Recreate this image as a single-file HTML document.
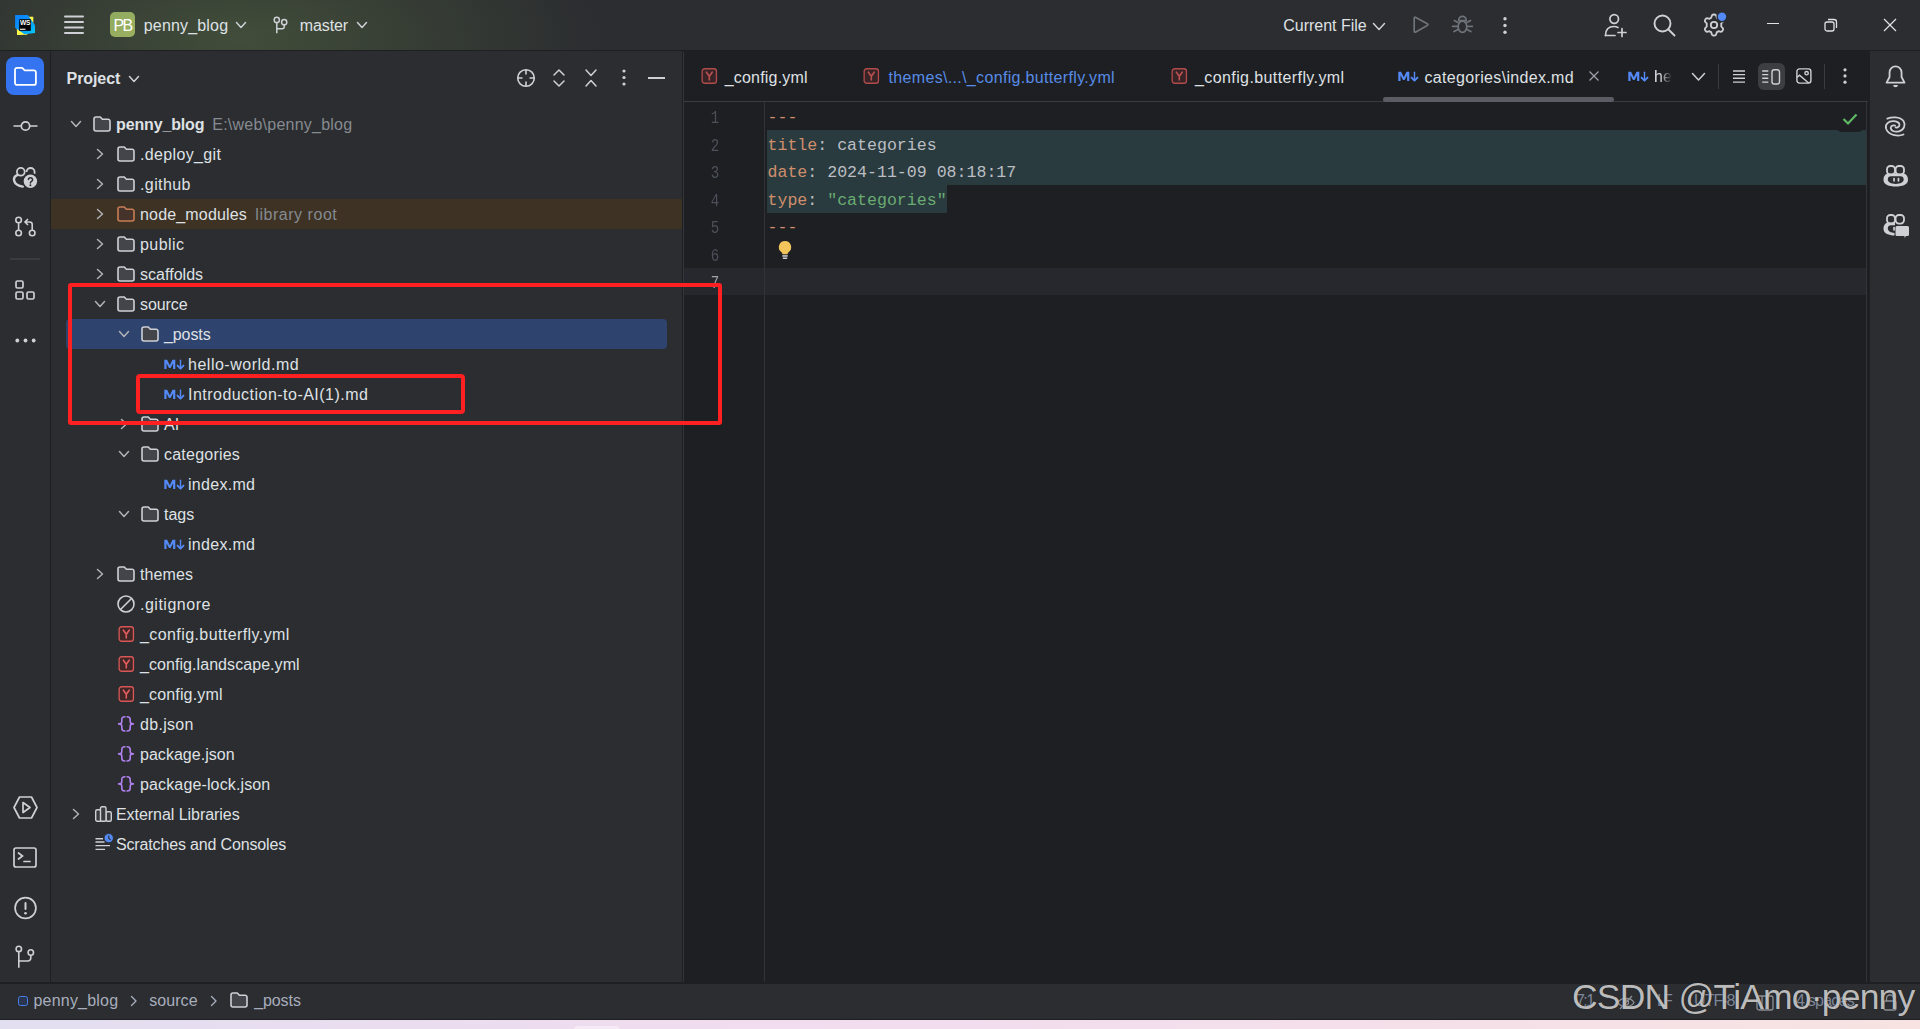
<!DOCTYPE html><html><head><meta charset="utf-8"><style>
*{margin:0;padding:0;box-sizing:border-box}
html,body{width:1920px;height:1029px;overflow:hidden;background:#2B2D30;font-family:"Liberation Sans",sans-serif;color:#DFE1E5}
.abs{position:absolute}
.t{position:absolute;white-space:pre;font-size:16px;line-height:20px;color:#DFE1E5}
svg{position:absolute;overflow:visible}
.mono{font-family:"Liberation Mono",monospace}
</style></head><body><div class="abs" style="left:0px;top:0px;width:1920px;height:50px;background:#2B2D30;"></div>
<div class="abs" style="left:0px;top:0px;width:900px;height:50px;background:radial-gradient(ellipse 360px 150px at 240px 38px, rgba(105,135,75,0.36) 0%, rgba(95,120,68,0.21) 50%, rgba(43,45,48,0) 100%);"></div>
<div class="abs" style="left:0px;top:50px;width:1920px;height:1px;background:#1E1F22;"></div>
<div class="abs" style="left:0px;top:51px;width:50px;height:931px;background:#2B2D30;"></div>
<div class="abs" style="left:50px;top:51px;width:1px;height:931px;background:#1E1F22;"></div>
<div class="abs" style="left:51px;top:51px;width:631px;height:931px;background:#2B2D30;"></div>
<div class="abs" style="left:682px;top:51px;width:2px;height:931px;background:#1E1F22;"></div>
<div class="abs" style="left:683px;top:52px;width:1px;height:930px;background:#34363B;"></div>
<div class="abs" style="left:684px;top:51px;width:1184px;height:931px;background:#1E1F22;"></div>
<div class="abs" style="left:1868px;top:51px;width:2px;height:931px;background:#1E1F22;"></div>
<div class="abs" style="left:1870px;top:51px;width:50px;height:931px;background:#2B2D30;"></div>
<div class="abs" style="left:0px;top:982px;width:1920px;height:2px;background:#1E1F22;"></div>
<div class="abs" style="left:0px;top:984px;width:1920px;height:36px;background:#2B2D30;"></div>
<div class="abs" style="left:0px;top:1019px;width:1920px;height:1px;background:#1E1F22;"></div>
<div class="abs" style="left:0px;top:1020px;width:1920px;height:9px;background:linear-gradient(90deg,#E2DFF0 0%,#EADDF0 20%,#F0DCEF 35%,#F3DEED 60%,#F6E1E6 85%,#F8E3E2 100%);"></div>
<div class="abs" style="left:574px;top:1025.5px;width:46px;height:4px;background:#F6EAF6;border-radius:4px 4px 0 0"></div>
<svg style="left:15px;top:15px" width="20" height="20" viewBox="0 0 20 20"><defs><linearGradient id="wsg" x1="0" y1="0" x2="1" y2="1"><stop offset="0" stop-color="#0A80FF"/><stop offset="0.55" stop-color="#0796F5"/><stop offset="1" stop-color="#07D0F6"/></linearGradient></defs><polygon points="1.5,1.5 18.3,1.8 18.3,10 12,19.8 2,20" fill="#FCF84A"/><polygon points="0.1,0.1 12.8,0.1 20,10.2 20,18 9.5,19.3 0.1,12.8" fill="url(#wsg)"/><rect x="4.2" y="4.2" width="11.6" height="11.6" fill="#000"/><text x="10" y="10.2" font-family="Liberation Sans" font-weight="bold" font-size="6.6" letter-spacing="-0.4" fill="#fff" text-anchor="middle">WS</text><rect x="5" y="13.7" width="5.5" height="1.1" fill="#fff"/></svg>
<svg style="left:64px;top:15px" width="20" height="20" viewBox="0 0 20 20"><g stroke="#CED0D6" stroke-width="2" stroke-linecap="round"><line x1="1" y1="1.5" x2="19" y2="1.5"/><line x1="1" y1="7" x2="19" y2="7"/><line x1="1" y1="12.5" x2="19" y2="12.5"/><line x1="1" y1="18" x2="19" y2="18"/></g></svg>
<div class="abs" style="left:110px;top:12px;width:25px;height:25px;background:linear-gradient(135deg,#8EAA5F,#9DB060);border-radius:5px"></div>
<div class="t" style="left:113.5px;top:15.76px;font-size:16px;line-height:20.0px;color:#FFFFFF;font-weight:normal;letter-spacing:-1.772px;">PB</div>
<div class="t" style="left:143.75px;top:15.76px;font-size:16px;line-height:20.0px;color:#DFE1E5;font-weight:normal;letter-spacing:0.175px;">penny_blog</div>
<svg style="left:236px;top:22px" width="10" height="6" viewBox="0 0 10 6"><polyline points="0.5,0.5 5.0,5.5 9.5,0.5" fill="none" stroke="#CED0D6" stroke-width="1.5" stroke-linecap="round" stroke-linejoin="round"/></svg>
<svg style="left:273px;top:17px" width="15" height="17" viewBox="0 0 15 17"><g fill="none" stroke="#CED0D6" stroke-width="1.5"><circle cx="3.8" cy="2.9" r="2.6"/><circle cx="11.2" cy="5.2" r="2.6"/><path d="M3.8 5.5 V16.3 M11.2 7.8 V9.7 a2 2 0 0 1 -2 2 H3.8"/></g></svg>
<div class="t" style="left:299.8px;top:15.76px;font-size:16px;line-height:20.0px;color:#DFE1E5;font-weight:normal;letter-spacing:-0.118px;">master</div>
<svg style="left:356.5px;top:22px" width="10" height="6" viewBox="0 0 10 6"><polyline points="0.5,0.5 5.0,5.5 9.5,0.5" fill="none" stroke="#CED0D6" stroke-width="1.5" stroke-linecap="round" stroke-linejoin="round"/></svg>
<div class="t" style="left:1283.3px;top:15.76px;font-size:16px;line-height:20.0px;color:#DFE1E5;font-weight:normal;letter-spacing:-0.015px;">Current File</div>
<svg style="left:1373px;top:22.5px" width="12" height="7" viewBox="0 0 12 7"><polyline points="0.5,0.5 6.0,6.5 11.5,0.5" fill="none" stroke="#CED0D6" stroke-width="1.5" stroke-linecap="round" stroke-linejoin="round"/></svg>
<svg style="left:1412px;top:15px" width="18" height="20" viewBox="0 0 18 20"><path d="M2.2 3.3 Q2.2 1.6 3.8 2.5 L15.3 8.8 Q16.6 9.6 15.3 10.4 L3.8 16.9 Q2.2 17.8 2.2 16 Z" fill="none" stroke="#6F737A" stroke-width="1.7" stroke-linejoin="round"/></svg>
<svg style="left:1452px;top:15px" width="21" height="19" viewBox="0 0 21 19"><g fill="none" stroke="#6F737A" stroke-width="1.7" stroke-linecap="round"><path d="M6.75 5.6 V5 a3.7 3.7 0 0 1 7.4 0 V5.6 Z"/><ellipse cx="10.45" cy="11.75" rx="4.3" ry="5.6"/><path d="M2.3 5.6 L6 7.5 M0.6 11.3 H5.8 M2 16.5 L6 14.5 M18.6 5.6 L14.9 7.5 M20.3 11.3 H15.1 M18.9 16.5 L14.9 14.5"/></g></svg>
<svg style="left:1503px;top:16.5px" width="4" height="17" viewBox="0 0 4 17"><g fill="#CED0D6"><circle cx="2" cy="1.8" r="1.7"/><circle cx="2" cy="8.5" r="1.7"/><circle cx="2" cy="15.3" r="1.7"/></g></svg>
<svg style="left:1603.5px;top:13px" width="24" height="24" viewBox="0 0 24 24"><g fill="none" stroke="#CED0D6" stroke-width="1.7" stroke-linecap="round"><circle cx="10.2" cy="6" r="4.3"/><path d="M1.5 22.5 C1.5 16.5 5 13.5 10 13.5 C11.5 13.5 12.8 13.8 14 14.4"/><path d="M1.5 22.5 H11"/><path d="M18 15.5 V23.5 M14 19.5 H22"/></g></svg>
<svg style="left:1653px;top:14px" width="23" height="23" viewBox="0 0 23 23"><g fill="none" stroke="#CED0D6" stroke-width="1.9" stroke-linecap="round"><circle cx="9.5" cy="9.5" r="8"/><path d="M15.5 15.5 L21.5 21.5"/></g></svg>
<svg style="left:1702px;top:13px" width="24" height="24" viewBox="0 0 24 24"><g fill="none" stroke="#CED0D6" stroke-width="1.8" stroke-linejoin="round"><path d="M10 2.3 C10.8 1.2 13.2 1.2 14 2.3 L14.8 4.8 C15.3 5 16 5.4 16.5 5.8 L19 5.2 C20.3 5.3 21.5 7.3 21 8.6 L19.2 10.5 C19.3 11.1 19.3 12.9 19.2 13.5 L21 15.4 C21.5 16.7 20.3 18.7 19 18.8 L16.5 18.2 C16 18.6 15.3 19 14.8 19.2 L14 21.7 C13.2 22.8 10.8 22.8 10 21.7 L9.2 19.2 C8.7 19 8 18.6 7.5 18.2 L5 18.8 C3.7 18.7 2.5 16.7 3 15.4 L4.8 13.5 C4.7 12.9 4.7 11.1 4.8 10.5 L3 8.6 C2.5 7.3 3.7 5.3 5 5.2 L7.5 5.8 C8 5.4 8.7 5 9.2 4.8 Z"/><circle cx="12" cy="12" r="3.2"/></g></svg>
<svg style="left:1715.5px;top:11px" width="12" height="12" viewBox="0 0 12 12"><circle cx="6" cy="5.8" r="4.9" fill="#548AF7" stroke="#2B2D30" stroke-width="1.4"/></svg>
<div class="abs" style="left:1767px;top:23px;width:12px;height:1.2px;background:#DFE1E5;"></div>
<svg style="left:1824px;top:18px" width="14" height="14" viewBox="0 0 14 14"><g fill="none" stroke="#DFE1E5" stroke-width="1.3"><rect x="1" y="4" width="9" height="9" rx="2"/><path d="M4 1.5 h6 a2.5 2.5 0 0 1 2.5 2.5 v6"/></g></svg>
<svg style="left:1883px;top:18px" width="14" height="14" viewBox="0 0 14 14"><g stroke="#DFE1E5" stroke-width="1.3"><line x1="1" y1="1" x2="13" y2="13"/><line x1="13" y1="1" x2="1" y2="13"/></g></svg>
<div class="abs" style="left:6px;top:57px;width:38px;height:38px;background:#3574F0;border-radius:8px"></div>
<svg style="left:13px;top:64px" width="24" height="24" viewBox="0 0 24 24"><path d="M2 5.9 a2 2 0 0 1 2-2 h5.2 l2.5 2.5 h9.2 a2 2 0 0 1 2 2 v10.5 a2 2 0 0 1 -2 2 h-16.9 a2 2 0 0 1 -2-2 Z" fill="none" stroke="#FFFFFF" stroke-width="1.8" stroke-linejoin="round"/></svg>
<svg style="left:13px;top:120px" width="25" height="12" viewBox="0 0 25 12"><g fill="none" stroke="#CED0D6" stroke-width="1.7"><circle cx="12.5" cy="6" r="4.2"/><path d="M0.5 6 H8.3 M16.7 6 H24.5"/></g></svg>
<svg style="left:13px;top:165px" width="25" height="24" viewBox="0 0 25 24"><g fill="none" stroke="#CED0D6" stroke-width="1.8"><circle cx="7.8" cy="6.8" r="3.9"/><path d="M13.6 7 a4 4 0 0 1 8 0 v1.8"/></g><path d="M4.2 10.2 C-0.8 12.5 -0.5 19.8 9.8 21.6" fill="none" stroke="#CED0D6" stroke-width="2.4" stroke-linecap="round"/><circle cx="17.4" cy="16.3" r="6.7" fill="#CED0D6"/><path d="M15.4 14.6 a2.1 2 0 1 1 3.1 1.8 c-0.8 0.45 -1.1 0.9 -1.1 1.7" fill="none" stroke="#2B2D30" stroke-width="1.5" stroke-linecap="round"/><circle cx="17.4" cy="20.2" r="1" fill="#2B2D30"/></svg>
<svg style="left:14px;top:215px" width="23" height="22" viewBox="0 0 23 22"><g fill="none" stroke="#CED0D6" stroke-width="1.6"><circle cx="4.6" cy="5" r="2.8"/><circle cx="4.6" cy="18" r="2.8"/><circle cx="18.2" cy="18" r="2.8"/><path d="M4.6 7.8 V15.2 M18.2 15.2 V9.5 a2.5 2.5 0 0 0 -2.5-2.5 H11.5 M14 4 L11 7 L14 10"/></g></svg>
<div class="abs" style="left:10px;top:258px;width:30px;height:2px;background:#393B40;"></div>
<svg style="left:15px;top:280px" width="21" height="21" viewBox="0 0 21 21"><g fill="none" stroke="#CED0D6" stroke-width="1.7"><rect x="1" y="1" width="7" height="7" rx="1.5"/><rect x="1" y="12" width="7" height="7" rx="1.5"/><rect x="12" y="12" width="7" height="7" rx="1.5"/></g></svg>
<svg style="left:15px;top:338px" width="21" height="5" viewBox="0 0 21 5"><g fill="#CED0D6"><circle cx="2.3" cy="2.5" r="1.9"/><circle cx="10.5" cy="2.5" r="1.9"/><circle cx="18.7" cy="2.5" r="1.9"/></g></svg>
<svg style="left:13px;top:796px" width="25" height="23" viewBox="0 0 25 23"><g fill="none" stroke="#CED0D6" stroke-width="1.7" stroke-linejoin="round"><path d="M6.5 1 H18.5 L24 11.5 L18.5 22 H6.5 L1 11.5 Z"/><path d="M10 6.5 L17 11.5 L10 16.5 Z"/></g></svg>
<svg style="left:13px;top:847px" width="24" height="21" viewBox="0 0 24 21"><g fill="none" stroke="#CED0D6" stroke-width="1.7" stroke-linecap="round"><rect x="1" y="1" width="22" height="19" rx="2"/><path d="M5.5 6 L9.5 9 L5.5 12 M11 14.5 H17"/></g></svg>
<svg style="left:13px;top:896px" width="24" height="24" viewBox="0 0 24 24"><g fill="none" stroke="#CED0D6" stroke-width="1.7"><circle cx="12.5" cy="12" r="10.4"/></g><rect x="11.5" y="6" width="2" height="8" rx="1" fill="#CED0D6"/><circle cx="12.5" cy="17.3" r="1.3" fill="#CED0D6"/></svg>
<svg style="left:15px;top:946px" width="21" height="23" viewBox="0 0 21 23"><g fill="none" stroke="#CED0D6" stroke-width="1.6"><circle cx="3.8" cy="2.9" r="2.7"/><circle cx="15.8" cy="6.5" r="2.7"/><path d="M3.8 5.6 V21.8 M15.8 9.2 V12 a3 3 0 0 1 -3 3 H3.8"/></g></svg>
<svg style="left:1884px;top:64px" width="23" height="24" viewBox="0 0 23 24"><path d="M2.6 18.7 L5.55 13 V8.4 A6 6 0 0 1 17.55 8.4 V13 L20.5 18.7 Z" fill="none" stroke="#CED0D6" stroke-width="1.8" stroke-linejoin="round"/><path d="M9.2 21 a2.35 2.35 0 0 0 4.7 0 Z" fill="#CED0D6"/></svg>
<svg style="left:1882px;top:113px" width="28" height="26" viewBox="0 0 28 26"><g fill="none" stroke="#CED0D6" stroke-width="1.75" stroke-linecap="round"><path d="M5.3 5.6 C9 4 18 3 21.5 8 C24 12 22 17 17 18.3 C12 19.5 8.5 17.5 8.8 14.5 C9 12.5 11.5 12 13.1 12.6"/><path d="M21.5 21.5 C17 23.5 7 23 4.2 16 C2.5 11 6.5 8.3 11 8.2 C14.5 8.1 17.7 9.5 17.5 12 C17.3 14 15 14.8 13.6 14.4"/></g></svg>
<svg style="left:1883px;top:165px" width="26" height="22" viewBox="0 0 26 22"><g fill="none" stroke="#CED0D6" stroke-width="1.8"><rect x="4" y="1" width="8" height="8.6" rx="3.3"/><rect x="12.6" y="1" width="8.4" height="8.6" rx="3.3"/></g><path fill-rule="evenodd" fill="#CED0D6" d="M0.5 15 C0.5 10.5 3 8.6 6 8.6 H19.5 C22.5 8.6 25 10.5 25 15 C25 19.5 19.5 21.5 12.75 21.5 C6 21.5 0.5 19.5 0.5 15 Z M4.8 14.6 C4.8 12.2 6 11.2 8 11.2 H17.5 C19.5 11.2 20.7 12.2 20.7 14.6 C20.7 17.4 17.5 18.9 12.75 18.9 C8 18.9 4.8 17.4 4.8 14.6 Z"/><rect x="10.2" y="12.8" width="1.7" height="4" rx="0.8" fill="#CED0D6"/><rect x="14.6" y="12.8" width="1.7" height="4" rx="0.8" fill="#CED0D6"/></svg>
<svg style="left:1883px;top:214px" width="26" height="24" viewBox="0 0 26 24"><g fill="none" stroke="#CED0D6" stroke-width="1.8"><rect x="4" y="1" width="8" height="8.6" rx="3.3"/><rect x="12.6" y="1" width="8.4" height="8.6" rx="3.3"/></g><path fill-rule="evenodd" fill="#CED0D6" d="M0.5 15 C0.5 10.5 3 8.6 6 8.6 H12 V11.2 H8 C6 11.2 4.8 12.2 4.8 14.6 C4.8 17.4 8 18.9 11.5 18.9 V21.5 C6 21.4 0.5 19.5 0.5 15 Z"/><rect x="10.2" y="12.8" width="1.7" height="4" rx="0.8" fill="#CED0D6"/><path d="M14 12 H24.5 a1.5 1.5 0 0 1 1.5 1.5 V20.5 a1.5 1.5 0 0 1 -1.5 1.5 H23 L21.5 24 V22 H14 a1.5 1.5 0 0 1 -1.5 -1.5 V13.5 A1.5 1.5 0 0 1 14 12 Z" fill="#CED0D6"/></svg>
<div class="t" style="left:66.6px;top:68.66px;font-size:16px;line-height:20.0px;color:#DFE1E5;font-weight:bold;letter-spacing:-0.093px;">Project</div>
<svg style="left:129px;top:76px" width="10" height="6" viewBox="0 0 10 6"><polyline points="0.5,0.5 5.0,5.5 9.5,0.5" fill="none" stroke="#CED0D6" stroke-width="1.5" stroke-linecap="round" stroke-linejoin="round"/></svg>
<svg style="left:516px;top:68px" width="20" height="20" viewBox="0 0 20 20"><g fill="none" stroke="#CED0D6" stroke-width="1.6"><circle cx="10" cy="10" r="8.3"/><path d="M10 1.7 V6.5 M10 13.5 V18.3 M1.7 10 H6.5 M13.5 10 H18.3"/></g></svg>
<svg style="left:553px;top:69px" width="12" height="18" viewBox="0 0 12 18"><g fill="none" stroke="#CED0D6" stroke-width="1.5" stroke-linecap="round" stroke-linejoin="round"><polyline points="1,6 6,1 11,6"/><polyline points="1,12 6,17 11,12"/></g></svg>
<svg style="left:585px;top:69px" width="12" height="18" viewBox="0 0 12 18"><g fill="none" stroke="#CED0D6" stroke-width="1.5" stroke-linecap="round" stroke-linejoin="round"><polyline points="1,1 6,6.5 11,1"/><polyline points="1,17 6,11.5 11,17"/></g></svg>
<svg style="left:622px;top:69px" width="4" height="17" viewBox="0 0 4 17"><g fill="#CED0D6"><circle cx="2" cy="2" r="1.6"/><circle cx="2" cy="8.5" r="1.6"/><circle cx="2" cy="15" r="1.6"/></g></svg>
<div class="abs" style="left:648px;top:77px;width:17px;height:1.8px;background:#CED0D6;"></div>
<div class="abs" style="left:51px;top:199px;width:631px;height:30px;background:#3D3223;"></div>
<div class="abs" style="left:66px;top:319px;width:601px;height:30px;background:#2E436E;border-radius:4px"></div>
<svg style="left:71px;top:121px" width="10" height="6" viewBox="0 0 10 6"><polyline points="0.5,0.5 5.0,5.5 9.5,0.5" fill="none" stroke="#B0B3B8" stroke-width="1.5" stroke-linecap="round" stroke-linejoin="round"/></svg>
<svg style="left:93px;top:116px" width="18" height="16" viewBox="0 0 18 16"><path d="M1 3 a2 2 0 0 1 2-2 h4.3 l2.1 2.2 H15 a2 2 0 0 1 2 2 V13 a2 2 0 0 1-2 2 H3 a2 2 0 0 1-2-2 Z" fill="#43454A" stroke="#CED0D6" stroke-width="1.6" stroke-linejoin="round"/></svg>
<div class="t" style="left:116px;top:115.16px;font-size:16px;line-height:20.0px;color:#DFE1E5;font-weight:bold;letter-spacing:-0.148px;">penny_blog</div>
<div class="t" style="left:212.3px;top:115.16px;font-size:16px;line-height:20.0px;color:#868A91;font-weight:normal;letter-spacing:0.229px;">E:\web\penny_blog</div>
<svg style="left:96.5px;top:149px" width="6" height="10" viewBox="0 0 6 10"><polyline points="0.5,0.5 5.5,5.0 0.5,9.5" fill="none" stroke="#B0B3B8" stroke-width="1.5" stroke-linecap="round" stroke-linejoin="round"/></svg>
<svg style="left:117px;top:146px" width="18" height="16" viewBox="0 0 18 16"><path d="M1 3 a2 2 0 0 1 2-2 h4.3 l2.1 2.2 H15 a2 2 0 0 1 2 2 V13 a2 2 0 0 1-2 2 H3 a2 2 0 0 1-2-2 Z" fill="#43454A" stroke="#CED0D6" stroke-width="1.6" stroke-linejoin="round"/></svg>
<div class="t" style="left:140px;top:145.16px;font-size:16px;line-height:20.0px;color:#DFE1E5;font-weight:normal;letter-spacing:0.346px;">.deploy_git</div>
<svg style="left:96.5px;top:179px" width="6" height="10" viewBox="0 0 6 10"><polyline points="0.5,0.5 5.5,5.0 0.5,9.5" fill="none" stroke="#B0B3B8" stroke-width="1.5" stroke-linecap="round" stroke-linejoin="round"/></svg>
<svg style="left:117px;top:176px" width="18" height="16" viewBox="0 0 18 16"><path d="M1 3 a2 2 0 0 1 2-2 h4.3 l2.1 2.2 H15 a2 2 0 0 1 2 2 V13 a2 2 0 0 1-2 2 H3 a2 2 0 0 1-2-2 Z" fill="#43454A" stroke="#CED0D6" stroke-width="1.6" stroke-linejoin="round"/></svg>
<div class="t" style="left:140px;top:175.16px;font-size:16px;line-height:20.0px;color:#DFE1E5;font-weight:normal;letter-spacing:0.393px;">.github</div>
<svg style="left:96.5px;top:209px" width="6" height="10" viewBox="0 0 6 10"><polyline points="0.5,0.5 5.5,5.0 0.5,9.5" fill="none" stroke="#B0B3B8" stroke-width="1.5" stroke-linecap="round" stroke-linejoin="round"/></svg>
<svg style="left:117px;top:206px" width="18" height="16" viewBox="0 0 18 16"><path d="M1 3 a2 2 0 0 1 2-2 h4.3 l2.1 2.2 H15 a2 2 0 0 1 2 2 V13 a2 2 0 0 1-2 2 H3 a2 2 0 0 1-2-2 Z" fill="#45322B" stroke="#C77D55" stroke-width="1.6" stroke-linejoin="round"/></svg>
<div class="t" style="left:140px;top:205.16px;font-size:16px;line-height:20.0px;color:#DFE1E5;font-weight:normal;letter-spacing:0.169px;">node_modules</div>
<div class="t" style="left:255.3px;top:205.16px;font-size:16px;line-height:20.0px;color:#868A91;font-weight:normal;letter-spacing:0.535px;">library root</div>
<svg style="left:96.5px;top:239px" width="6" height="10" viewBox="0 0 6 10"><polyline points="0.5,0.5 5.5,5.0 0.5,9.5" fill="none" stroke="#B0B3B8" stroke-width="1.5" stroke-linecap="round" stroke-linejoin="round"/></svg>
<svg style="left:117px;top:236px" width="18" height="16" viewBox="0 0 18 16"><path d="M1 3 a2 2 0 0 1 2-2 h4.3 l2.1 2.2 H15 a2 2 0 0 1 2 2 V13 a2 2 0 0 1-2 2 H3 a2 2 0 0 1-2-2 Z" fill="#43454A" stroke="#CED0D6" stroke-width="1.6" stroke-linejoin="round"/></svg>
<div class="t" style="left:140px;top:235.16px;font-size:16px;line-height:20.0px;color:#DFE1E5;font-weight:normal;letter-spacing:0.415px;">public</div>
<svg style="left:96.5px;top:269px" width="6" height="10" viewBox="0 0 6 10"><polyline points="0.5,0.5 5.5,5.0 0.5,9.5" fill="none" stroke="#B0B3B8" stroke-width="1.5" stroke-linecap="round" stroke-linejoin="round"/></svg>
<svg style="left:117px;top:266px" width="18" height="16" viewBox="0 0 18 16"><path d="M1 3 a2 2 0 0 1 2-2 h4.3 l2.1 2.2 H15 a2 2 0 0 1 2 2 V13 a2 2 0 0 1-2 2 H3 a2 2 0 0 1-2-2 Z" fill="#43454A" stroke="#CED0D6" stroke-width="1.6" stroke-linejoin="round"/></svg>
<div class="t" style="left:140px;top:265.16px;font-size:16px;line-height:20.0px;color:#DFE1E5;font-weight:normal;letter-spacing:0.027px;">scaffolds</div>
<svg style="left:95px;top:301px" width="10" height="6" viewBox="0 0 10 6"><polyline points="0.5,0.5 5.0,5.5 9.5,0.5" fill="none" stroke="#B0B3B8" stroke-width="1.5" stroke-linecap="round" stroke-linejoin="round"/></svg>
<svg style="left:117px;top:296px" width="18" height="16" viewBox="0 0 18 16"><path d="M1 3 a2 2 0 0 1 2-2 h4.3 l2.1 2.2 H15 a2 2 0 0 1 2 2 V13 a2 2 0 0 1-2 2 H3 a2 2 0 0 1-2-2 Z" fill="#43454A" stroke="#CED0D6" stroke-width="1.6" stroke-linejoin="round"/></svg>
<div class="t" style="left:140px;top:295.16px;font-size:16px;line-height:20.0px;color:#DFE1E5;font-weight:normal;letter-spacing:-0.072px;">source</div>
<svg style="left:119px;top:331px" width="10" height="6" viewBox="0 0 10 6"><polyline points="0.5,0.5 5.0,5.5 9.5,0.5" fill="none" stroke="#B0B3B8" stroke-width="1.5" stroke-linecap="round" stroke-linejoin="round"/></svg>
<svg style="left:141px;top:326px" width="18" height="16" viewBox="0 0 18 16"><path d="M1 3 a2 2 0 0 1 2-2 h4.3 l2.1 2.2 H15 a2 2 0 0 1 2 2 V13 a2 2 0 0 1-2 2 H3 a2 2 0 0 1-2-2 Z" fill="#43454A" stroke="#CED0D6" stroke-width="1.6" stroke-linejoin="round"/></svg>
<div class="t" style="left:164px;top:325.16px;font-size:16px;line-height:20.0px;color:#DFE1E5;font-weight:normal;letter-spacing:-0.090px;">_posts</div>
<svg style="left:164px;top:359px" width="20" height="11" viewBox="0 0 20 11"><path d="M0.3 10 V0.8 H3.1 L5.8 6.3 L8.5 0.8 H11.3 V10 H9.1 V4.2 L6.6 9 H5 L2.5 4.2 V10 Z" fill="#548AF7"/><g stroke="#548AF7" fill="none" stroke-linecap="round" stroke-linejoin="round"><path d="M16.5 1.2 V9.6" stroke-width="1.4"/><path d="M13.5 6.6 L16.5 9.6 L19.5 6.6" stroke-width="1.9"/></g></svg>
<div class="t" style="left:188px;top:355.16px;font-size:16px;line-height:20.0px;color:#DFE1E5;font-weight:normal;letter-spacing:0.511px;">hello-world.md</div>
<svg style="left:164px;top:389px" width="20" height="11" viewBox="0 0 20 11"><path d="M0.3 10 V0.8 H3.1 L5.8 6.3 L8.5 0.8 H11.3 V10 H9.1 V4.2 L6.6 9 H5 L2.5 4.2 V10 Z" fill="#548AF7"/><g stroke="#548AF7" fill="none" stroke-linecap="round" stroke-linejoin="round"><path d="M16.5 1.2 V9.6" stroke-width="1.4"/><path d="M13.5 6.6 L16.5 9.6 L19.5 6.6" stroke-width="1.9"/></g></svg>
<div class="t" style="left:188px;top:385.16px;font-size:16px;line-height:20.0px;color:#DFE1E5;font-weight:normal;letter-spacing:0.473px;">Introduction-to-AI(1).md</div>
<svg style="left:120.5px;top:419px" width="6" height="10" viewBox="0 0 6 10"><polyline points="0.5,0.5 5.5,5.0 0.5,9.5" fill="none" stroke="#B0B3B8" stroke-width="1.5" stroke-linecap="round" stroke-linejoin="round"/></svg>
<svg style="left:141px;top:416px" width="18" height="16" viewBox="0 0 18 16"><path d="M1 3 a2 2 0 0 1 2-2 h4.3 l2.1 2.2 H15 a2 2 0 0 1 2 2 V13 a2 2 0 0 1-2 2 H3 a2 2 0 0 1-2-2 Z" fill="#43454A" stroke="#CED0D6" stroke-width="1.6" stroke-linejoin="round"/></svg>
<div class="t" style="left:164px;top:415.16px;font-size:16px;line-height:20.0px;color:#DFE1E5;font-weight:normal;">AI</div>
<svg style="left:119px;top:451px" width="10" height="6" viewBox="0 0 10 6"><polyline points="0.5,0.5 5.0,5.5 9.5,0.5" fill="none" stroke="#B0B3B8" stroke-width="1.5" stroke-linecap="round" stroke-linejoin="round"/></svg>
<svg style="left:141px;top:446px" width="18" height="16" viewBox="0 0 18 16"><path d="M1 3 a2 2 0 0 1 2-2 h4.3 l2.1 2.2 H15 a2 2 0 0 1 2 2 V13 a2 2 0 0 1-2 2 H3 a2 2 0 0 1-2-2 Z" fill="#43454A" stroke="#CED0D6" stroke-width="1.6" stroke-linejoin="round"/></svg>
<div class="t" style="left:164px;top:445.16px;font-size:16px;line-height:20.0px;color:#DFE1E5;font-weight:normal;letter-spacing:0.227px;">categories</div>
<svg style="left:164px;top:479px" width="20" height="11" viewBox="0 0 20 11"><path d="M0.3 10 V0.8 H3.1 L5.8 6.3 L8.5 0.8 H11.3 V10 H9.1 V4.2 L6.6 9 H5 L2.5 4.2 V10 Z" fill="#548AF7"/><g stroke="#548AF7" fill="none" stroke-linecap="round" stroke-linejoin="round"><path d="M16.5 1.2 V9.6" stroke-width="1.4"/><path d="M13.5 6.6 L16.5 9.6 L19.5 6.6" stroke-width="1.9"/></g></svg>
<div class="t" style="left:188px;top:475.16px;font-size:16px;line-height:20.0px;color:#DFE1E5;font-weight:normal;letter-spacing:0.285px;">index.md</div>
<svg style="left:119px;top:511px" width="10" height="6" viewBox="0 0 10 6"><polyline points="0.5,0.5 5.0,5.5 9.5,0.5" fill="none" stroke="#B0B3B8" stroke-width="1.5" stroke-linecap="round" stroke-linejoin="round"/></svg>
<svg style="left:141px;top:506px" width="18" height="16" viewBox="0 0 18 16"><path d="M1 3 a2 2 0 0 1 2-2 h4.3 l2.1 2.2 H15 a2 2 0 0 1 2 2 V13 a2 2 0 0 1-2 2 H3 a2 2 0 0 1-2-2 Z" fill="#43454A" stroke="#CED0D6" stroke-width="1.6" stroke-linejoin="round"/></svg>
<div class="t" style="left:164px;top:505.16px;font-size:16px;line-height:20.0px;color:#DFE1E5;font-weight:normal;letter-spacing:0.013px;">tags</div>
<svg style="left:164px;top:539px" width="20" height="11" viewBox="0 0 20 11"><path d="M0.3 10 V0.8 H3.1 L5.8 6.3 L8.5 0.8 H11.3 V10 H9.1 V4.2 L6.6 9 H5 L2.5 4.2 V10 Z" fill="#548AF7"/><g stroke="#548AF7" fill="none" stroke-linecap="round" stroke-linejoin="round"><path d="M16.5 1.2 V9.6" stroke-width="1.4"/><path d="M13.5 6.6 L16.5 9.6 L19.5 6.6" stroke-width="1.9"/></g></svg>
<div class="t" style="left:188px;top:535.16px;font-size:16px;line-height:20.0px;color:#DFE1E5;font-weight:normal;letter-spacing:0.285px;">index.md</div>
<svg style="left:96.5px;top:569px" width="6" height="10" viewBox="0 0 6 10"><polyline points="0.5,0.5 5.5,5.0 0.5,9.5" fill="none" stroke="#B0B3B8" stroke-width="1.5" stroke-linecap="round" stroke-linejoin="round"/></svg>
<svg style="left:117px;top:566px" width="18" height="16" viewBox="0 0 18 16"><path d="M1 3 a2 2 0 0 1 2-2 h4.3 l2.1 2.2 H15 a2 2 0 0 1 2 2 V13 a2 2 0 0 1-2 2 H3 a2 2 0 0 1-2-2 Z" fill="#43454A" stroke="#CED0D6" stroke-width="1.6" stroke-linejoin="round"/></svg>
<div class="t" style="left:140px;top:565.16px;font-size:16px;line-height:20.0px;color:#DFE1E5;font-weight:normal;letter-spacing:0.089px;">themes</div>
<svg style="left:117px;top:595px" width="18" height="18" viewBox="0 0 18 18"><g fill="none" stroke="#CED0D6" stroke-width="1.6"><circle cx="9" cy="9" r="8"/><path d="M3.5 14.5 L14.5 3.5"/></g></svg>
<div class="t" style="left:140px;top:595.16px;font-size:16px;line-height:20.0px;color:#DFE1E5;font-weight:normal;letter-spacing:0.507px;">.gitignore</div>
<svg style="left:118px;top:626px" width="16" height="16" viewBox="0 0 16 16"><g opacity="1"><rect x="1.15" y="0.75" width="14.3" height="14.5" rx="2.6" fill="#3F2627" stroke="#D95757" stroke-width="1.3"/><path d="M5.4 4.2 L8.3 8.3 L11.2 4.2 M8.3 8.3 V12" fill="none" stroke="#E35D5D" stroke-width="1.6" stroke-linecap="round"/></g></svg>
<div class="t" style="left:140px;top:625.16px;font-size:16px;line-height:20.0px;color:#DFE1E5;font-weight:normal;letter-spacing:0.415px;">_config.butterfly.yml</div>
<svg style="left:118px;top:656px" width="16" height="16" viewBox="0 0 16 16"><g opacity="1"><rect x="1.15" y="0.75" width="14.3" height="14.5" rx="2.6" fill="#3F2627" stroke="#D95757" stroke-width="1.3"/><path d="M5.4 4.2 L8.3 8.3 L11.2 4.2 M8.3 8.3 V12" fill="none" stroke="#E35D5D" stroke-width="1.6" stroke-linecap="round"/></g></svg>
<div class="t" style="left:140px;top:655.16px;font-size:16px;line-height:20.0px;color:#DFE1E5;font-weight:normal;letter-spacing:0.066px;">_config.landscape.yml</div>
<svg style="left:118px;top:686px" width="16" height="16" viewBox="0 0 16 16"><g opacity="1"><rect x="1.15" y="0.75" width="14.3" height="14.5" rx="2.6" fill="#3F2627" stroke="#D95757" stroke-width="1.3"/><path d="M5.4 4.2 L8.3 8.3 L11.2 4.2 M8.3 8.3 V12" fill="none" stroke="#E35D5D" stroke-width="1.6" stroke-linecap="round"/></g></svg>
<div class="t" style="left:140px;top:685.16px;font-size:16px;line-height:20.0px;color:#DFE1E5;font-weight:normal;letter-spacing:0.153px;">_config.yml</div>
<svg style="left:118px;top:716px" width="16" height="16" viewBox="0 0 16 16"><g fill="none" stroke="#B180F0" stroke-width="1.6" stroke-linecap="round" stroke-linejoin="round"><path d="M6.9 0.8 C4.5 0.8 3.8 1.8 3.8 3.5 V5.8 C3.8 7 3 7.9 0.6 7.9 C3 7.9 3.8 8.8 3.8 10 V12.3 C3.8 14 4.5 15 6.9 15"/><path d="M9.1 0.8 C11.5 0.8 12.2 1.8 12.2 3.5 V5.8 C12.2 7 13 7.9 15.4 7.9 C13 7.9 12.2 8.8 12.2 10 V12.3 C12.2 14 11.5 15 9.1 15"/></g></svg>
<div class="t" style="left:140px;top:715.16px;font-size:16px;line-height:20.0px;color:#DFE1E5;font-weight:normal;letter-spacing:0.315px;">db.json</div>
<svg style="left:118px;top:746px" width="16" height="16" viewBox="0 0 16 16"><g fill="none" stroke="#B180F0" stroke-width="1.6" stroke-linecap="round" stroke-linejoin="round"><path d="M6.9 0.8 C4.5 0.8 3.8 1.8 3.8 3.5 V5.8 C3.8 7 3 7.9 0.6 7.9 C3 7.9 3.8 8.8 3.8 10 V12.3 C3.8 14 4.5 15 6.9 15"/><path d="M9.1 0.8 C11.5 0.8 12.2 1.8 12.2 3.5 V5.8 C12.2 7 13 7.9 15.4 7.9 C13 7.9 12.2 8.8 12.2 10 V12.3 C12.2 14 11.5 15 9.1 15"/></g></svg>
<div class="t" style="left:140px;top:745.16px;font-size:16px;line-height:20.0px;color:#DFE1E5;font-weight:normal;letter-spacing:0.034px;">package.json</div>
<svg style="left:118px;top:776px" width="16" height="16" viewBox="0 0 16 16"><g fill="none" stroke="#B180F0" stroke-width="1.6" stroke-linecap="round" stroke-linejoin="round"><path d="M6.9 0.8 C4.5 0.8 3.8 1.8 3.8 3.5 V5.8 C3.8 7 3 7.9 0.6 7.9 C3 7.9 3.8 8.8 3.8 10 V12.3 C3.8 14 4.5 15 6.9 15"/><path d="M9.1 0.8 C11.5 0.8 12.2 1.8 12.2 3.5 V5.8 C12.2 7 13 7.9 15.4 7.9 C13 7.9 12.2 8.8 12.2 10 V12.3 C12.2 14 11.5 15 9.1 15"/></g></svg>
<div class="t" style="left:140px;top:775.16px;font-size:16px;line-height:20.0px;color:#DFE1E5;font-weight:normal;letter-spacing:0.137px;">package-lock.json</div>
<svg style="left:72.5px;top:809px" width="6" height="10" viewBox="0 0 6 10"><polyline points="0.5,0.5 5.5,5.0 0.5,9.5" fill="none" stroke="#B0B3B8" stroke-width="1.5" stroke-linecap="round" stroke-linejoin="round"/></svg>
<svg style="left:95px;top:806px" width="17" height="16" viewBox="0 0 17 16"><g fill="#3A3C40" stroke="#CED0D6" stroke-width="1.4"><rect x="0.7" y="3.7" width="6" height="11.6" rx="1.5"/><rect x="11" y="5.7" width="5.3" height="9.6" rx="1.5"/><rect x="5.5" y="0.7" width="5.5" height="14.6" rx="1.5"/></g></svg>
<div class="t" style="left:116px;top:805.16px;font-size:16px;line-height:20.0px;color:#DFE1E5;font-weight:normal;letter-spacing:-0.050px;">External Libraries</div>
<svg style="left:95px;top:832px" width="20" height="20" viewBox="0 0 20 20"><g stroke="#CED0D6" stroke-width="1.4"><path d="M0.5 6.8 H8 M0.5 10 H9.5 M0.5 13.6 H15 M0.5 17.4 H10"/></g><circle cx="13.75" cy="6.1" r="4.6" fill="#548AF7" stroke="#2B2D30" stroke-width="0.8"/><path d="M13.75 3.4 V6.2 L15.5 7.9" fill="none" stroke="#2B2D30" stroke-width="1.1"/></svg>
<div class="t" style="left:116px;top:835.16px;font-size:16px;line-height:20.0px;color:#DFE1E5;font-weight:normal;letter-spacing:-0.152px;">Scratches and Consoles</div>
<div class="abs" style="left:684px;top:101px;width:1184px;height:1px;background:#393B40;"></div>
<svg style="left:700.5px;top:67.5px" width="16" height="16" viewBox="0 0 16 16"><g opacity="0.8"><rect x="1.15" y="0.75" width="14.3" height="14.5" rx="2.6" fill="#3F2627" stroke="#D95757" stroke-width="1.3"/><path d="M5.4 4.2 L8.3 8.3 L11.2 4.2 M8.3 8.3 V12" fill="none" stroke="#E35D5D" stroke-width="1.6" stroke-linecap="round"/></g></svg>
<div class="t" style="left:724.75px;top:67.96px;font-size:16px;line-height:20.0px;color:#DFE1E5;font-weight:normal;letter-spacing:0.189px;">_config.yml</div>
<svg style="left:862.5px;top:67.5px" width="16" height="16" viewBox="0 0 16 16"><g opacity="0.8"><rect x="1.15" y="0.75" width="14.3" height="14.5" rx="2.6" fill="#3F2627" stroke="#D95757" stroke-width="1.3"/><path d="M5.4 4.2 L8.3 8.3 L11.2 4.2 M8.3 8.3 V12" fill="none" stroke="#E35D5D" stroke-width="1.6" stroke-linecap="round"/></g></svg>
<div class="t" style="left:888.5px;top:67.96px;font-size:16px;line-height:20.0px;color:#578CE8;font-weight:normal;letter-spacing:0.334px;">themes\...\_config.butterfly.yml</div>
<svg style="left:1170.5px;top:67.5px" width="16" height="16" viewBox="0 0 16 16"><g opacity="0.8"><rect x="1.15" y="0.75" width="14.3" height="14.5" rx="2.6" fill="#3F2627" stroke="#D95757" stroke-width="1.3"/><path d="M5.4 4.2 L8.3 8.3 L11.2 4.2 M8.3 8.3 V12" fill="none" stroke="#E35D5D" stroke-width="1.6" stroke-linecap="round"/></g></svg>
<div class="t" style="left:1195px;top:67.96px;font-size:16px;line-height:20.0px;color:#DFE1E5;font-weight:normal;letter-spacing:0.400px;">_config.butterfly.yml</div>
<svg style="left:1398px;top:71.2px" width="20" height="11" viewBox="0 0 20 11"><path d="M0.3 10 V0.8 H3.1 L5.8 6.3 L8.5 0.8 H11.3 V10 H9.1 V4.2 L6.6 9 H5 L2.5 4.2 V10 Z" fill="#548AF7"/><g stroke="#548AF7" fill="none" stroke-linecap="round" stroke-linejoin="round"><path d="M16.5 1.2 V9.6" stroke-width="1.4"/><path d="M13.5 6.6 L16.5 9.6 L19.5 6.6" stroke-width="1.9"/></g></svg>
<div class="t" style="left:1424.5px;top:67.96px;font-size:16px;line-height:20.0px;color:#DFE1E5;font-weight:normal;letter-spacing:0.332px;">categories\index.md</div>
<svg style="left:1589px;top:71px" width="10" height="10" viewBox="0 0 10 10"><g stroke="#9DA0A8" stroke-width="1.3"><line x1="0.5" y1="0.5" x2="9.5" y2="9.5"/><line x1="9.5" y1="0.5" x2="0.5" y2="9.5"/></g></svg>
<div class="abs" style="left:1383px;top:97px;width:231px;height:5px;background:#5A5D63;border-radius:2.5px"></div>
<svg style="left:1628px;top:71.2px" width="20" height="11" viewBox="0 0 20 11"><path d="M0.3 10 V0.8 H3.1 L5.8 6.3 L8.5 0.8 H11.3 V10 H9.1 V4.2 L6.6 9 H5 L2.5 4.2 V10 Z" fill="#548AF7"/><g stroke="#548AF7" fill="none" stroke-linecap="round" stroke-linejoin="round"><path d="M16.5 1.2 V9.6" stroke-width="1.4"/><path d="M13.5 6.6 L16.5 9.6 L19.5 6.6" stroke-width="1.9"/></g></svg>
<div class="t" style="left:1654px;top:67.46px;font-size:16px;line-height:20.0px;color:#DFE1E5;font-weight:normal;-webkit-mask-image:linear-gradient(90deg,#000 30%,transparent 100%);mask-image:linear-gradient(90deg,#000 30%,transparent 100%)">he</div>
<svg style="left:1691.5px;top:72.5px" width="13" height="7.5" viewBox="0 0 13 7.5"><polyline points="0.5,0.5 6.5,7.0 12.5,0.5" fill="none" stroke="#CED0D6" stroke-width="1.5" stroke-linecap="round" stroke-linejoin="round"/></svg>
<div class="abs" style="left:1718px;top:64px;width:1px;height:25px;background:#393B40;"></div>
<svg style="left:1733px;top:69.5px" width="13" height="14" viewBox="0 0 13 14"><g stroke="#CED0D6" stroke-width="1.4"><path d="M0 1 H12 M0 4.6 H12 M0 8.3 H12 M0 12.1 H12"/></g></svg>
<div class="abs" style="left:1757.5px;top:62.5px;width:27px;height:27.5px;background:#3D3E42;border-radius:6px"></div>
<svg style="left:1762px;top:69.5px" width="18" height="16" viewBox="0 0 18 16"><g fill="none" stroke="#CED0D6" stroke-width="1.4"><path d="M0.2 1 H6.3 M0.2 4.6 H6.3 M0.2 8.3 H6.3 M0.2 12.1 H6.3"/><rect x="10" y="-0.3" width="7.5" height="14.3" rx="2.2"/></g></svg>
<svg style="left:1796px;top:68px" width="16" height="16" viewBox="0 0 16 16"><g fill="none" stroke="#CED0D6" stroke-width="1.4"><rect x="0.9" y="0.9" width="14" height="14.2" rx="2.5"/><circle cx="10.6" cy="5.2" r="1.7"/><path d="M0.9 9.6 L3.5 7.3 L12.6 15"/></g></svg>
<div class="abs" style="left:1824px;top:64px;width:1px;height:25px;background:#393B40;"></div>
<svg style="left:1843px;top:68px" width="4" height="17" viewBox="0 0 4 17"><g fill="#CED0D6"><circle cx="2" cy="1.8" r="1.6"/><circle cx="2" cy="7.9" r="1.6"/><circle cx="2" cy="14.2" r="1.6"/></g></svg>
<div class="abs" style="left:767px;top:130px;width:1099px;height:55px;background:#293B3E;"></div>
<div class="abs" style="left:767px;top:185px;width:180px;height:27.5px;background:#293B3E;"></div>
<div class="abs" style="left:684px;top:267.5px;width:1182px;height:27.5px;background:#26282E;"></div>
<div class="abs" style="left:764px;top:102px;width:1px;height:880px;background:#313338;"></div>
<div class="abs" style="left:1866px;top:102px;width:1px;height:880px;background:#313338;"></div>
<div class="abs" style="left:1836px;top:102px;width:28px;height:30px;background:#1E1F22;border-radius:0 0 6px 6px"></div>
<svg style="left:1842px;top:113px" width="16" height="12" viewBox="0 0 16 12"><path d="M1.5 6 L6 10.5 L14.5 1.5" fill="none" stroke="#5FB865" stroke-width="2.2"/></svg>
<div class="t mono" style="left:690px;width:29.3px;text-align:right;top:109.40px;font-size:16.58px;line-height:20px;color:#4B5059;transform:scale(0.85,1.09);transform-origin:100% 15.6px">1</div>
<div class="t mono" style="left:767.5px;top:108.40px;font-size:16.58px;line-height:20px"><span style="color:#CF8E6D">---</span></div>
<div class="t mono" style="left:690px;width:29.3px;text-align:right;top:136.90px;font-size:16.58px;line-height:20px;color:#4B5059;transform:scale(0.85,1.09);transform-origin:100% 15.6px">2</div>
<div class="t mono" style="left:767.5px;top:135.90px;font-size:16.58px;line-height:20px"><span style="color:#CF8E6D">title</span><span style="color:#BCBEC4">: </span><span style="color:#BCBEC4">categories</span></div>
<div class="t mono" style="left:690px;width:29.3px;text-align:right;top:164.40px;font-size:16.58px;line-height:20px;color:#4B5059;transform:scale(0.85,1.09);transform-origin:100% 15.6px">3</div>
<div class="t mono" style="left:767.5px;top:163.40px;font-size:16.58px;line-height:20px"><span style="color:#CF8E6D">date</span><span style="color:#BCBEC4">: </span><span style="color:#BCBEC4">2024-11-09 08:18:17</span></div>
<div class="t mono" style="left:690px;width:29.3px;text-align:right;top:191.90px;font-size:16.58px;line-height:20px;color:#4B5059;transform:scale(0.85,1.09);transform-origin:100% 15.6px">4</div>
<div class="t mono" style="left:767.5px;top:190.90px;font-size:16.58px;line-height:20px"><span style="color:#CF8E6D">type</span><span style="color:#BCBEC4">: </span><span style="color:#6AAB73">"categories"</span></div>
<div class="t mono" style="left:690px;width:29.3px;text-align:right;top:219.40px;font-size:16.58px;line-height:20px;color:#4B5059;transform:scale(0.85,1.09);transform-origin:100% 15.6px">5</div>
<div class="t mono" style="left:767.5px;top:218.40px;font-size:16.58px;line-height:20px"><span style="color:#CF8E6D">---</span></div>
<div class="t mono" style="left:690px;width:29.3px;text-align:right;top:246.90px;font-size:16.58px;line-height:20px;color:#4B5059;transform:scale(0.85,1.09);transform-origin:100% 15.6px">6</div>
<div class="t mono" style="left:690px;width:29.3px;text-align:right;top:274.40px;font-size:16.58px;line-height:20px;color:#A1A3AB;transform:scale(0.85,1.09);transform-origin:100% 15.6px">7</div>
<svg style="left:778px;top:240px" width="14" height="20" viewBox="0 0 14 20"><path d="M7 1 a6.2 6.2 0 0 1 3.5 11.3 c-0.6 0.5 -1 1.2 -1 2 H4.5 c0-0.8 -0.4-1.5 -1-2 A6.2 6.2 0 0 1 7 1 Z" fill="#F2C55C"/><rect x="4.3" y="15.2" width="5.4" height="1.5" fill="#CED0D6"/><rect x="4.8" y="17.5" width="4.4" height="1.5" fill="#CED0D6"/></svg>
<div class="abs" style="left:18px;top:996px;width:10px;height:10px;background:#2A3550;border:1.6px solid #4A7FE8;border-radius:2.5px"></div>
<div class="t" style="left:33.5px;top:991.26px;font-size:16px;line-height:20.0px;color:#A8ADBD;font-weight:normal;letter-spacing:0.205px;">penny_blog</div>
<svg style="left:131px;top:996px" width="5.5" height="10" viewBox="0 0 5.5 10"><polyline points="0.5,0.5 5.0,5.0 0.5,9.5" fill="none" stroke="#A8ADBD" stroke-width="1.4" stroke-linecap="round" stroke-linejoin="round"/></svg>
<div class="t" style="left:149.3px;top:991.26px;font-size:16px;line-height:20.0px;color:#A8ADBD;font-weight:normal;letter-spacing:0.045px;">source</div>
<svg style="left:211px;top:996px" width="5.5" height="10" viewBox="0 0 5.5 10"><polyline points="0.5,0.5 5.0,5.0 0.5,9.5" fill="none" stroke="#A8ADBD" stroke-width="1.4" stroke-linecap="round" stroke-linejoin="round"/></svg>
<svg style="left:230px;top:992px" width="18" height="16" viewBox="0 0 18 16"><path d="M1 3 a2 2 0 0 1 2-2 h4.3 l2.1 2.2 H15 a2 2 0 0 1 2 2 V13 a2 2 0 0 1-2 2 H3 a2 2 0 0 1-2-2 Z" fill="#43454A" stroke="#CED0D6" stroke-width="1.6" stroke-linejoin="round"/></svg>
<div class="t" style="left:254.2px;top:991.26px;font-size:16px;line-height:20.0px;color:#A8ADBD;font-weight:normal;letter-spacing:-0.090px;">_posts</div>
<div class="t" style="left:1576px;top:991.26px;font-size:16px;line-height:20.0px;color:#7D8699;font-weight:normal;letter-spacing:-1.583px;">7:1</div>
<div class="t" style="left:1657px;top:991.26px;font-size:16px;line-height:20.0px;color:#7D8699;font-weight:normal;letter-spacing:-2.836px;">LF</div>
<div class="t" style="left:1694px;top:991.26px;font-size:16px;line-height:20.0px;color:#7D8699;font-weight:normal;letter-spacing:-0.966px;">UTF-8</div>
<div class="t" style="left:1796px;top:991.26px;font-size:16px;line-height:20.0px;color:#7D8699;font-weight:normal;letter-spacing:-0.756px;">4 spaces</div>
<svg style="left:1617px;top:995px" width="18" height="15" viewBox="0 0 18 15"><g fill="none" stroke="#8C8F94" stroke-width="1.3"><path d="M1 7.5 C4 2 14 2 17 7.5 C14 13 4 13 1 7.5 Z"/><circle cx="9" cy="7.5" r="2.5"/><path d="M3 14 L15 1"/></g></svg>
<svg style="left:1756px;top:995px" width="18" height="16" viewBox="0 0 18 16"><g fill="none" stroke="#8C8F94" stroke-width="1.3"><rect x="1" y="1" width="16" height="14" rx="2"/><path d="M6 1 V15 M12 1 V15"/></g></svg>
<svg style="left:1883px;top:994px" width="14" height="17" viewBox="0 0 14 17"><g fill="none" stroke="#8C8F94" stroke-width="1.4"><rect x="1" y="7" width="12" height="9" rx="1.5"/><path d="M3.5 7 V4.5 a3.5 3.5 0 0 1 7 0"/></g></svg>
<div class="t" style="left:1572px;top:974.51px;font-size:35.5px;line-height:44.38px;color:rgba(205,205,205,0.92);font-weight:normal;letter-spacing:-0.812px;text-shadow:0 0 1px rgba(0,0,0,0.6)">CSDN @TiAmo·penny</div>
<div class="abs" style="left:68px;top:283px;width:654px;height:142px;background:transparent;border:4px solid #FF2121;border-radius:3px"></div>
<div class="abs" style="left:136px;top:374px;width:329px;height:40px;background:transparent;border:4px solid #FF2121;border-radius:4px"></div></body></html>
